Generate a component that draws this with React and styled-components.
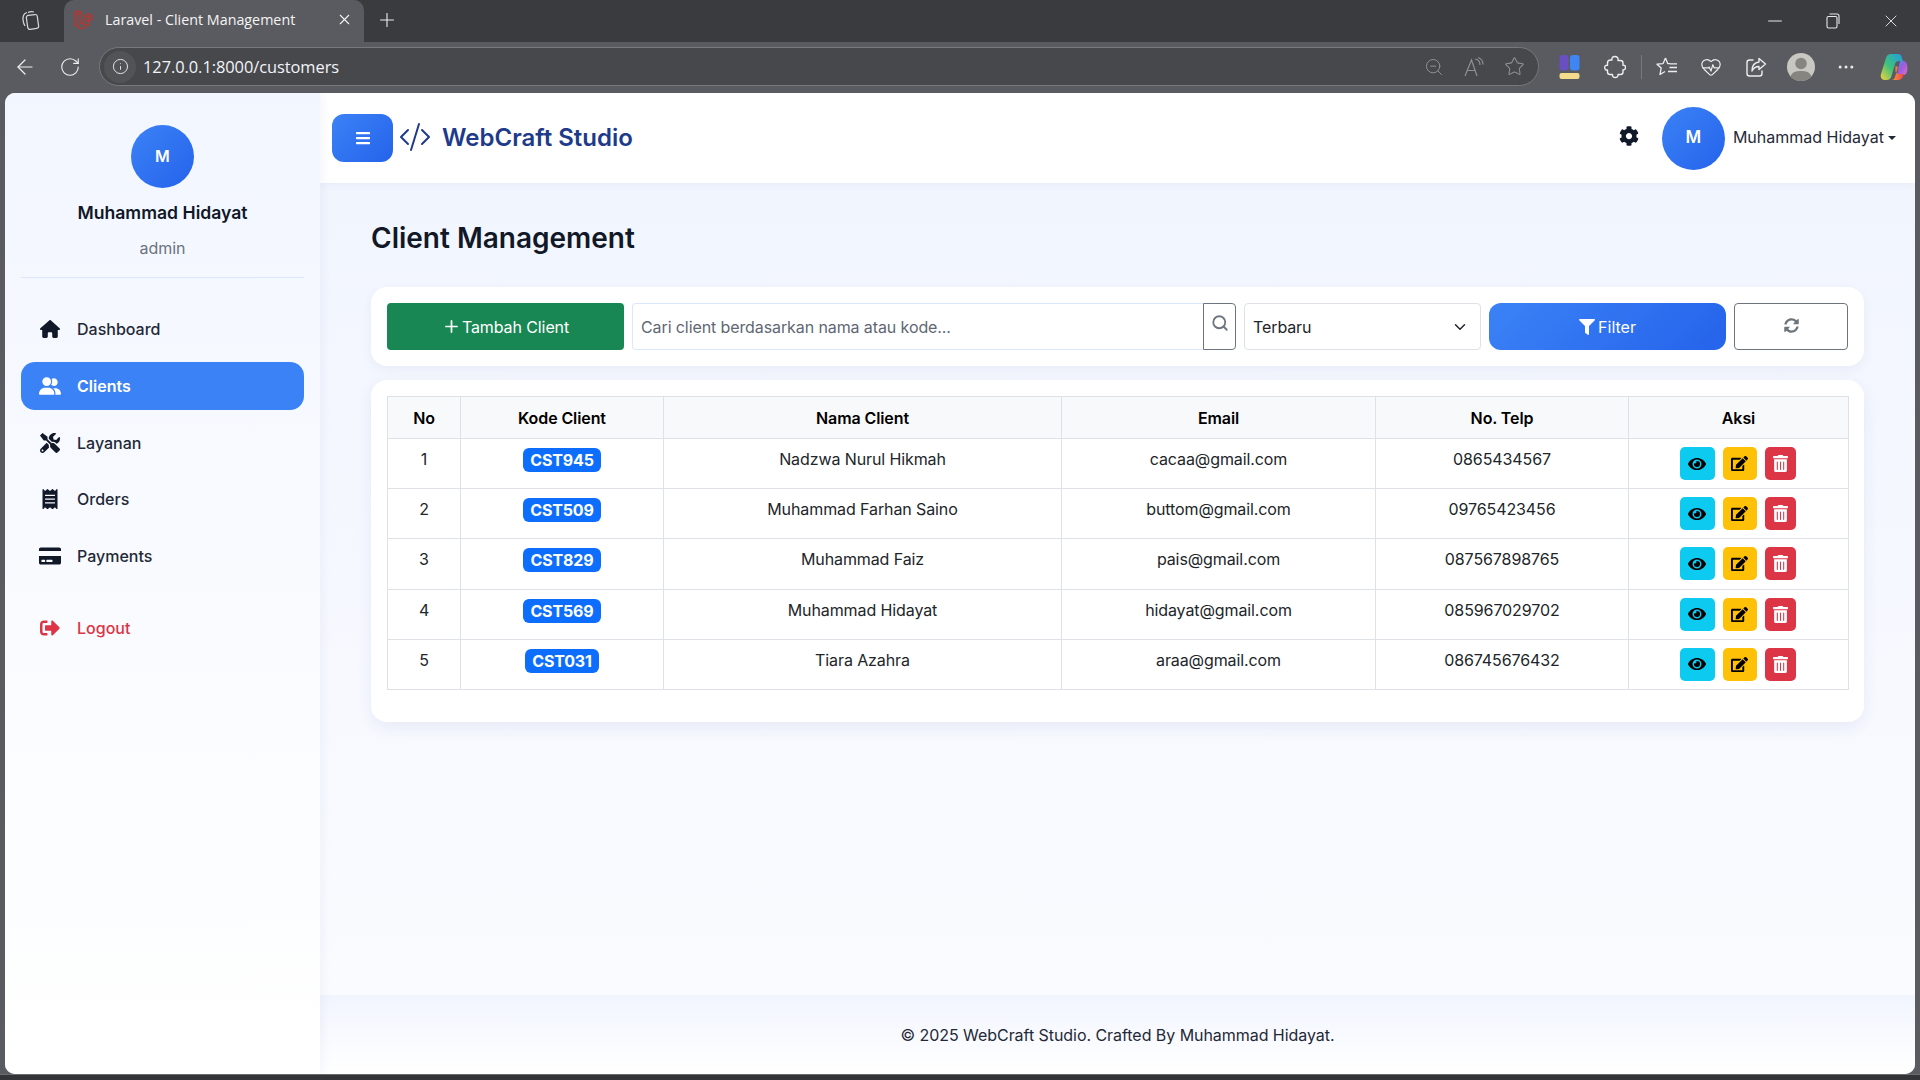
import React from "react";
import styled, { createGlobalStyle } from "styled-components";
import { FaBars, FaCog, FaCreditCard, FaEdit, FaEye, FaFilter, FaSignOutAlt, FaSyncAlt, FaTools, FaTrashAlt, FaReceipt } from "react-icons/fa";
import { FaHouse, FaUserGroup } from "react-icons/fa6";
import { BsCodeSlash } from "react-icons/bs";
import { ChevronDown, Plus, X, Minus, ArrowLeft, RotateCw, Info, ZoomOut, Star, MoreHorizontal, HeartPulse, Search } from "lucide-react";

const Global = createGlobalStyle`
  html, body { margin: 0; padding: 0; height: 100%; overflow: hidden; }
  body { font-family: Inter, "Liberation Sans", sans-serif; background: #5a5b60; }
  * { box-sizing: border-box; }
`;

const Shell = styled.div`
  width: 1920px; height: 1080px; display: flex; flex-direction: column; background: #5a5b60;
`;
const TabStrip = styled.div`
  height: 42px; background: #3a3b3f; display: flex; align-items: flex-end; color: #fff;
  font-family: "Open Sans", sans-serif;
`;
const TabsButton = styled.div`
  width: 64px; height: 42px; display: flex; align-items: center; justify-content: center; color: #d8d8da;
  padding: 0 5px 2px 0;
`;
const Tab = styled.div`
  width: 300px; height: 42px; background: #5a5b60; border-radius: 10px 10px 0 0;
  display: flex; align-items: center; padding: 0 11px 3px 9px; font-size: 14.3px; color: #f4f4f4;
`;
const TabTitle = styled.span`
  margin-left: 12px; flex: 1; white-space: nowrap;
`;
const NewTab = styled.div`
  width: 45px; height: 42px; display: flex; align-items: center; justify-content: center; color: #eee; padding-bottom: 2px;
`;
const WindowControls = styled.div`
  margin-left: auto; display: flex; height: 42px; color: #e8e8e8;
`;
const WindowSlot = styled.div`
  width: 58px; display: flex; align-items: center; justify-content: center;
`;
const Toolbar = styled.div`
  height: 51px; background: #5a5b60; display: flex; align-items: center; color: #f0f0f0;
  font-family: "Open Sans", sans-serif;
  padding-bottom: 2px;
`;
const NavButton = styled.div`
  width: 45px; height: 36px; display: flex; align-items: center; justify-content: center; margin-left: ${p => p.$ml || 0}px;
`;
const AddressBar = styled.div`
  width: 1440px; height: 39px; margin-left: 7px; border: 1px solid #77787b; border-radius: 20px; background: #47484c;
  display: flex; align-items: center; padding: 0 13px 0 8px; font-size: 16.4px;
`;
const InfoChip = styled.span`
  width: 32px; height: 32px; display: flex; align-items: center; justify-content: center; color: #e5e5e5;
  background: #525357; border-radius: 50%; margin-left: -4px;
`;
const Url = styled.span`
  margin-left: 7px; color: #f2f4f8; flex: 1; letter-spacing: -0.05px;
`;
const AddressIcons = styled.div`
  display: flex; gap: 19px; align-items: center; color: #8f9094;
`;
const ToolIcons = styled.div`
  display: flex; align-items: center; margin-left: 8px; flex: 1;
`;
const ToolSlot = styled.div`
  width: ${p => p.$w || 45}px; display: flex; justify-content: center; align-items: center; color: #ededed;
`;
const Divider = styled.div`
  width: 1px; height: 24px; background: #77787b; margin: 0 4px;
`;
const Viewport = styled.div`
  flex: 1; min-height: 0; padding: 0 5px; display: flex; flex-direction: column;
`;
const Page = styled.div`
  flex: 1; min-height: 0; display: flex; background: #fff; border-radius: 10px; overflow: hidden;
`;
const BottomEdge = styled.div`
  height: 6px; margin: 0 -5px; background: #333438; border-top: 1px solid #6b6c70;
`;
const Sidebar = styled.aside`
  width: 315px; flex: none; padding: 32px 16px 0; display: flex; flex-direction: column;
  background: linear-gradient(180deg, #f2f6ff 0%, #ffffff 100%);
  box-shadow: 2px 0 10px rgba(30, 58, 138, 0.05); position: relative; z-index: 2;
`;
const Profile = styled.div`
  display: flex; flex-direction: column; align-items: center; padding-bottom: 17px; border-bottom: 1px solid #dbe7fb;
`;
const Avatar = styled.div`
  width: 63px; height: 63px; border-radius: 50%; flex: none; display: flex; align-items: center; justify-content: center; padding-bottom: 2px;
  color: #fff; font-weight: 600; font-size: ${p => p.$fs || 16}px; background: linear-gradient(135deg, #3b82f6, #2563eb);
`;
const ProfileName = styled.div`
  margin-top: 13px; font-size: 17.6px; line-height: 24px; font-weight: 600; color: #111827;
`;
const ProfileRole = styled.div`
  margin-top: 11px; font-size: 16px; line-height: 24px; color: #6b7280;
`;
const Nav = styled.nav`
  display: flex; flex-direction: column; gap: 8px; margin-top: 27px;
`;
const NavItem = styled.a`
  height: 48.7px; display: flex; align-items: center; padding-left: 16px; border-radius: 14px; font-size: 16px;
  font-weight: ${p => (p.$active ? 600 : 500)};
  margin-top: ${p => p.$mt || 0}px;
  color: ${p => (p.$active ? "#fff" : p.$danger ? "#dc3545" : "#1f2937")};
  background: ${p => (p.$active ? "#3b82f6" : "transparent")};
`;
const NavIcon = styled.span`
  width: 26px; display: flex; justify-content: center; margin: 0 14px 0 0; font-size: ${p => p.$fs || 20}px;
  color: ${p => (p.$active ? "#fff" : p.$danger ? "#dc3545" : "#111827")};
`;
const Main = styled.div`
  flex: 1; min-width: 0; display: flex; flex-direction: column;
`;
const Topbar = styled.header`
  height: 90px; flex: none; background: #fff; display: flex; align-items: center; padding: 0 19px 0 12px;
  box-shadow: 0 2px 8px rgba(30, 58, 138, 0.05); position: relative; z-index: 1;
`;
const MenuButton = styled.div`
  width: 61px; height: 48px; border-radius: 12px; color: #fff; font-size: 16px; display: flex; align-items: center; justify-content: center; padding-bottom: 1px;
  background: linear-gradient(135deg, #3b82f6, #2563eb);
`;
const Brand = styled.div`
  display: flex; align-items: center; margin-left: 6px; color: #1e3a8a; font-size: 24px; font-weight: 600; gap: 11px; padding-bottom: 2px;
`;
const TopRight = styled.div`
  margin-left: auto; display: flex; align-items: center; color: #1f2937;
`;
const Gear = styled.span`
  display: flex; font-size: 20px; color: #111827; margin-right: 23px; margin-top: -4px;
`;
const UserName = styled.span`
  margin-left: 8px; font-size: 16px; font-weight: 400; color: #1f2937; padding-bottom: 2px;
`;
const Caret = styled.span`
  margin-left: 4px; width: 0; height: 0; border-left: 4px solid transparent; border-right: 4px solid transparent; border-top: 4.5px solid #1f2937;
`;
const Content = styled.main`
  flex: 1; padding: 34px 51px 0; background: linear-gradient(180deg, #f1f5fe 0%, #fafbff 100%);
`;
const Title = styled.h1`
  margin: 0 0 28px; font-size: 28px; line-height: 42px; font-weight: 600; color: #111827;
`;
const Card = styled.section`
  background: #fff; border-radius: 16px; padding: 16px; margin-bottom: 14px;
  box-shadow: 0 4px 12px rgba(30, 58, 138, 0.05);
`;
const FilterRow = styled.div`
  display: grid; grid-template-columns: 237px 1fr 237px 237px 114px; gap: 8px; height: 47px;
`;
const AddButton = styled.div`
  background: #198754; color: #fff; border-radius: 4px; font-size: 16px; font-weight: 400; letter-spacing: -0.1px; display: flex; align-items: center; justify-content: center; gap: 1px;
`;
const SearchGroup = styled.div`
  display: flex;
`;
const SearchInput = styled.input`
  flex: 1; min-width: 0; border: 1px solid #dbe7fb; border-right: none; border-radius: 4px 0 0 4px; padding: 0 8px; font: 400 16px Inter, sans-serif; letter-spacing: -0.1px; color: #1f2937; outline: none;
  &::placeholder { color: #5f6773; opacity: 1; }
`;
const SearchButton = styled.div`
  width: 33px; border: 1px solid #6c757d; border-radius: 0 4px 4px 0; color: #6c757d; display: flex; justify-content: center; padding-top: 10px;
`;
const SelectBox = styled.div`
  border: 1px solid #dee2e6; border-radius: 4px; padding: 0 11px 0 8px; display: flex; align-items: center; justify-content: space-between; font-size: 16px; letter-spacing: -0.1px; color: #212529;
`;
const FilterButton = styled.div`
  border-radius: 12px; color: #fff; font-size: 16px; font-weight: 400; display: flex; align-items: center; justify-content: center; gap: 3px;
  background: linear-gradient(135deg, #3b82f6, #2563eb);
`;
const RefreshButton = styled.div`
  border: 1px solid #6c757d; border-radius: 4px; color: #6c757d; display: flex; align-items: center; justify-content: center; font-size: 15px; padding-bottom: 2px;
`;
const TableCard = styled(Card)`
  padding-bottom: 32px; box-shadow: 0 6px 16px rgba(30, 58, 138, 0.07); margin-bottom: 0;
`;
const Table = styled.table`
  width: 100%; border-collapse: collapse; table-layout: fixed; font-size: 16px; color: #212529; letter-spacing: -0.1px;
`;
const Th = styled.th`
  border: 1px solid #dee2e6; background: #f8f9fa; height: 42px; padding: 0 8px; text-align: center; font-weight: 600; color: #000;
`;
const Td = styled.td`
  border: 1px solid #dee2e6; padding: 8px 8px 8.2px; text-align: center; vertical-align: top; line-height: 24px;
`;
const Badge = styled.span`
  display: inline-block; height: 24px; line-height: 24px; padding: 0 7.5px; border-radius: 6px; margin-top: 1px; background: #0d6efd; color: #fff; font-weight: 700; font-size: 16px; vertical-align: top; letter-spacing: -0.15px;
`;
const Actions = styled.div`
  display: flex; justify-content: center; gap: 8px; padding-right: 2px;
`;
const ActionButton = styled.div`
  width: ${p => p.$w}px; height: 33px; border-radius: 5px; display: flex; align-items: center; justify-content: center; font-size: ${p => p.$fs || 16}px;
  background: ${p => p.$bg}; color: ${p => p.$fg};
`;
const Footer = styled.footer`
  height: 79px; flex: none; display: flex; align-items: center; justify-content: center; font-size: 16px; font-weight: 400; letter-spacing: -0.05px; color: #1f2937;
  background: linear-gradient(180deg, #f1f5fe 0%, #ffffff 100%);
`;

const TabsIcon = () => (
  <svg width="22" height="22" viewBox="0 0 22 22" fill="none" stroke="currentColor" strokeWidth="1.2">
    <rect x="8" y="6" width="11" height="14" rx="2.2" transform="rotate(-8 13 13)" />
    <path d="M6 17C4 14 3.5 9 4.5 6.5 5 5 6.500 4 8 3.500" />
    <path d="M9 3.500c2-1 4-1 6-.5" />
  </svg>
);
const LaravelIcon = () => (
  <svg width="20" height="22" viewBox="0 0 20 22" fill="none" stroke="#c3322b" strokeWidth="1.1" strokeLinejoin="round">
    <path d="M1.500 3.500 5 1.500l3.500 2v11L12 12.500M1.500 3.500v12l7 4.500 7-4v-4M1.500 3.500 5 5.500l3.500-2M5 5.500v12" />
    <path d="M12 6.500 15.500 4.500l3.500 2v4l-3.500 2-3.500-2zM15.500 8.500l3.500-2M15.500 8.500 12 6.500M15.500 8.500v4M8.500 14.500l7 1.500" />
  </svg>
);
const RestoreIcon = () => (
  <svg width="14" height="16" viewBox="0 0 14 16" fill="none" stroke="currentColor" strokeWidth="1.1">
    <rect x="1" y="3.500" width="10" height="11.500" rx="1.500" />
    <path d="M3.500 1h7.500a2 2 0 0 1 2 2v8" />
  </svg>
);
const ReadAloudIcon = () => (
  <svg width="22" height="22" viewBox="0 0 22 22" fill="none" stroke="currentColor" strokeWidth="1.2">
    <path d="M2 20 8.500 4 14 20M4.500 14.500h8" />
    <path d="M12 3c3 .5 5 3 5 6M15 1.500c3 1 5 4 5 7" />
  </svg>
);
const FavListIcon = () => (
  <svg width="24" height="22" viewBox="0 0 24 22" fill="none" stroke="currentColor" strokeWidth="1.3" strokeLinejoin="round">
    <path d="M10.500 2 12.700 7.500l2.300.2M8 7.700 2 8.200l4.200 3.700L5 18.500l5-3M10.500 2 8 7.700" />
    <path d="M15 7.800h7M14.500 11.500H22M13 15.500h9" />
  </svg>
);
const PuzzleIcon = () => (
  <svg width="22" height="24" viewBox="0 0 22 24" fill="none" stroke="currentColor" strokeWidth="1.4" strokeLinejoin="round">
    <path d="M8 5c-.5-2.500 1-3.500 3-3.500S14.500 3 14 5.500h2.500c1.500 0 2.500 1 2.500 2.500v2.200c2-.2 2.500 1 2.500 2.300s-.8 2.600-2.500 2.300V17c0 1.500-1 2.500-2.500 2.500H14c.2 2-1 3-2.800 3s-3-1-2.700-3H6c-1.500 0-2.500-1-2.500-2.500v-2c-2 .3-2.800-1-2.800-2.500S1.500 10 3.500 10.300V8C3.500 6 5 5 6.500 5z" />
  </svg>
);
const ShareIcon = () => (
  <svg width="22" height="22" viewBox="0 0 22 22" fill="none" stroke="currentColor" strokeWidth="1.4" strokeLinejoin="round" strokeLinecap="round">
    <path d="M8 4H4.500A2.500 2.500 0 0 0 2 6.500v11A2.500 2.500 0 0 0 4.500 20h10a2.500 2.500 0 0 0 2.500-2.500V15" />
    <path d="M14 2.500 20.500 8 14 13.500V10.500C10.500 10.500 8.500 12 7 15c0-5 2.500-8.500 7-9z" />
  </svg>
);
const ExtensionLogo = () => (
  <svg width="21" height="24" viewBox="0 0 21 24">
    <rect x="0.500" y="0" width="9" height="15.500" rx="3" fill="#6a4fc0" />
    <rect x="11" y="0" width="9.500" height="15.500" rx="3" fill="#3f86f5" />
    <rect x="0.500" y="18" width="20" height="6" rx="2" fill="#f4dc8c" />
  </svg>
);
const ProfileIcon = () => (
  <svg width="28" height="28" viewBox="0 0 28 28">
    <circle cx="14" cy="14" r="14" fill="#c8c7c1" />
    <circle cx="14" cy="10.500" r="5.800" fill="#868580" />
    <path d="M3.500 23.500C5 19 9 18 14 18s9 1 10.500 5.500A14 14 0 0 1 14 28 14 14 0 0 1 3.500 23.500z" fill="#868580" />
  </svg>
);
const CopilotLogo = () => (
  <svg width="28" height="28" viewBox="0 0 28 28">
    <defs>
      <linearGradient id="cpA" x1="0" y1="1" x2="1" y2="0"><stop offset="0" stopColor="#f5d33c" /><stop offset=".45" stopColor="#3ec27a" /><stop offset="1" stopColor="#1f9be8" /></linearGradient>
      <linearGradient id="cpB" x1="0" y1="0" x2="1" y2="1"><stop offset="0" stopColor="#4a90f0" /><stop offset=".5" stopColor="#a05bdc" /><stop offset="1" stopColor="#e070c8" /></linearGradient>
      <linearGradient id="cpC" x1="0" y1="0" x2="1" y2="0"><stop offset="0" stopColor="#f7a13a" /><stop offset="1" stopColor="#ee3f4e" /></linearGradient>
    </defs>
    <path d="M20 8h3c2.500 0 3.500 1.500 4 3.500.7 3 .5 6.500-.5 8.500-.7 1.500-2 2-3.500 2h-6z" fill="url(#cpB)" />
    <path d="M11 1h7c2 0 3 1 3.500 2.500L23 8h-4c-2 0-3.500 1-4 3l-3.500 12c-.5 2.500-2.500 4-5 4H5c-3 0-5-2.500-4-6L6 5c.7-2.500 2.500-4 5-4z" fill="url(#cpA)" />
    <path d="M15.500 13 18 14l-3 10c-.5 2-1.500 3-3.500 3H18c2.500 0 4-1.500 5-3.500l1-2.500h-5.500c-1.500 0-2.500-1-3-2.500z" fill="url(#cpC)" />
  </svg>
);

const navItems = [
  { label: "Dashboard", icon: <FaHouse /> },
  { label: "Clients", icon: <FaUserGroup />, active: true, fs: 22 },
  { label: "Layanan", icon: <FaTools /> },
  { label: "Orders", icon: <FaReceipt /> },
  { label: "Payments", icon: <FaCreditCard />, fs: 22 },
];

const clients = [
  ["CST945", "Nadzwa Nurul Hikmah", "cacaa@gmail.com", "0865434567"],
  ["CST509", "Muhammad Farhan Saino", "buttom@gmail.com", "09765423456"],
  ["CST829", "Muhammad Faiz", "pais@gmail.com", "087567898765"],
  ["CST569", "Muhammad Hidayat", "hidayat@gmail.com", "085967029702"],
  ["CST031", "Tiara Azahra", "araa@gmail.com", "086745676432"],
];

const columns = [
  ["No", 73], ["Kode Client", 203], ["Nama Client", 398], ["Email", 314], ["No. Telp", 253], ["Aksi", 220],
];

export default function App() {
  return (
    <Shell>
      <Global />
      <TabStrip>
        <TabsButton><TabsIcon /></TabsButton>
        <Tab>
          <LaravelIcon />
          <TabTitle>Laravel - Client Management</TabTitle>
          <X size={17} strokeWidth={1.5} />
        </Tab>
        <NewTab><Plus size={22} strokeWidth={1.2} /></NewTab>
        <WindowControls>
          <WindowSlot><Minus size={22} strokeWidth={1.1} /></WindowSlot>
          <WindowSlot><RestoreIcon /></WindowSlot>
          <WindowSlot><X size={20} strokeWidth={1.1} /></WindowSlot>
        </WindowControls>
      </TabStrip>
      <Toolbar>
        <NavButton $ml={2}><ArrowLeft size={24} strokeWidth={1.2} /></NavButton>
        <NavButton><RotateCw size={22} strokeWidth={1.2} /></NavButton>
        <AddressBar>
          <InfoChip><Info size={17} strokeWidth={1.4} /></InfoChip>
          <Url>127.0.0.1:8000/customers</Url>
          <AddressIcons>
            <ZoomOut size={20} strokeWidth={1.2} />
            <ReadAloudIcon />
            <Star size={21} strokeWidth={1.2} />
          </AddressIcons>
        </AddressBar>
        <ToolIcons>
          <ToolSlot><ExtensionLogo /></ToolSlot>
          <ToolSlot><PuzzleIcon /></ToolSlot>
          <Divider />
          <ToolSlot $w={42}><FavListIcon /></ToolSlot>
          <ToolSlot><HeartPulse size={22} strokeWidth={1.3} /></ToolSlot>
          <ToolSlot><ShareIcon /></ToolSlot>
          <ToolSlot><ProfileIcon /></ToolSlot>
          <ToolSlot><MoreHorizontal size={20} strokeWidth={1.6} /></ToolSlot>
          <ToolSlot $w={52}><CopilotLogo /></ToolSlot>
        </ToolIcons>
      </Toolbar>
      <Viewport>
        <Page>
          <Sidebar>
            <Profile>
              <Avatar>M</Avatar>
              <ProfileName>Muhammad Hidayat</ProfileName>
              <ProfileRole>admin</ProfileRole>
            </Profile>
            <Nav>
              {navItems.map(item => (
                <NavItem key={item.label} $active={item.active}>
                  <NavIcon $active={item.active} $fs={item.fs}>{item.icon}</NavIcon>
                  {item.label}
                </NavItem>
              ))}
              <NavItem $danger $mt={15}>
                <NavIcon $danger><FaSignOutAlt /></NavIcon>
                Logout
              </NavItem>
            </Nav>
          </Sidebar>
          <Main>
            <Topbar>
              <MenuButton><FaBars /></MenuButton>
              <Brand><BsCodeSlash size={32} />WebCraft Studio</Brand>
              <TopRight>
                <Gear><FaCog /></Gear>
                <Avatar $fs={17}>M</Avatar>
                <UserName>Muhammad Hidayat</UserName>
                <Caret />
              </TopRight>
            </Topbar>
            <Content>
              <Title>Client Management</Title>
              <Card>
                <FilterRow>
                  <AddButton><Plus size={19} strokeWidth={2.2} />Tambah Client</AddButton>
                  <SearchGroup>
                    <SearchInput placeholder="Cari client berdasarkan nama atau kode..." readOnly />
                    <SearchButton><Search size={18} strokeWidth={2.4} /></SearchButton>
                  </SearchGroup>
                  <SelectBox>Terbaru<ChevronDown size={18} strokeWidth={2} /></SelectBox>
                  <FilterButton><FaFilter size={16} />Filter</FilterButton>
                  <RefreshButton><FaSyncAlt /></RefreshButton>
                </FilterRow>
              </Card>
              <TableCard>
                <Table>
                  <colgroup>
                    {columns.map(([name, width]) => <col key={name} style={{ width }} />)}
                  </colgroup>
                  <thead>
                    <tr>{columns.map(([name]) => <Th key={name}>{name}</Th>)}</tr>
                  </thead>
                  <tbody>
                    {clients.map(([code, name, email, phone], i) => (
                      <tr key={code}>
                        <Td>{i + 1}</Td>
                        <Td><Badge>{code}</Badge></Td>
                        <Td>{name}</Td>
                        <Td>{email}</Td>
                        <Td>{phone}</Td>
                        <Td>
                          <Actions>
                            <ActionButton $w={35} $bg="#0dcaf0" $fg="#000" $fs={18}><FaEye /></ActionButton>
                            <ActionButton $w={34} $bg="#ffc107" $fg="#000" $fs={17}><FaEdit /></ActionButton>
                            <ActionButton $w={31} $bg="#dc3545" $fg="#fff" $fs={17}><FaTrashAlt /></ActionButton>
                          </Actions>
                        </Td>
                      </tr>
                    ))}
                  </tbody>
                </Table>
              </TableCard>
            </Content>
            <Footer>© 2025 WebCraft Studio. Crafted By Muhammad Hidayat.</Footer>
          </Main>
        </Page>
        <BottomEdge />
      </Viewport>
    </Shell>
  );
}
